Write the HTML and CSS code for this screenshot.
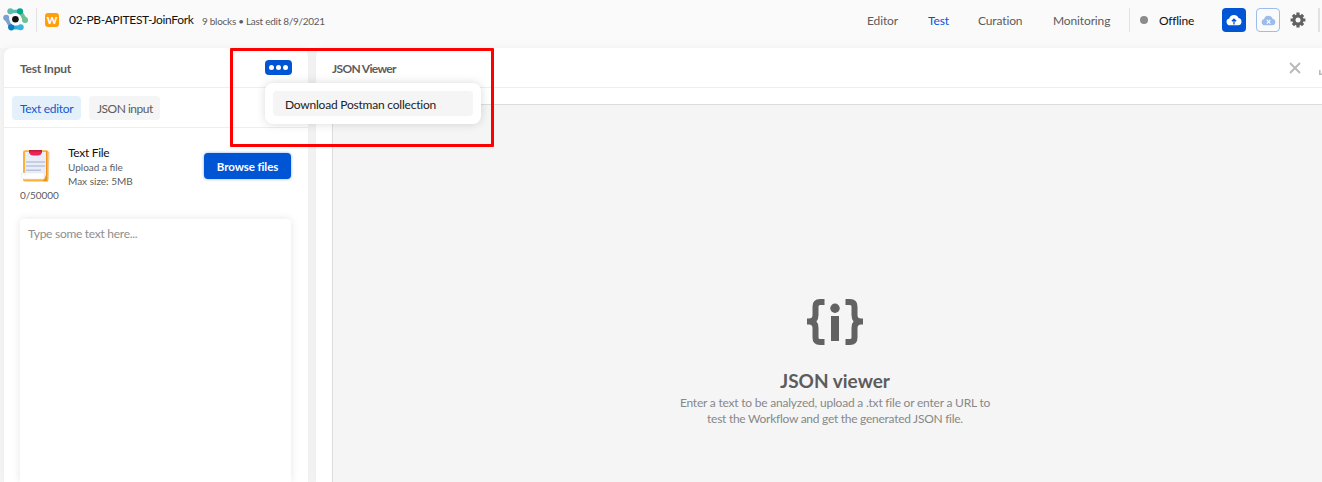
FILE: index.html
```html
<!DOCTYPE html>
<html lang="en">
<head>
<meta charset="utf-8">
<title>Workflow test</title>
<link rel="stylesheet" href="styles.css">
</head>
<body>
<header class="topbar">
  <svg class="logo" width="26" height="24" viewBox="0 0 26 24">
    <g fill="none" stroke-linecap="round">
      <path d="M7.5 3.5h10" stroke="#5bbcb0" stroke-width="3.6"/>
      <path d="M17 3.5l5.5 9" stroke="#6cc193" stroke-width="4.2"/>
      <path d="M3 9.5l5.5 10" stroke="#7d9fd0" stroke-width="4.2"/>
      <path d="M8.5 19.5h9" stroke="#34acd8" stroke-width="4"/>
    </g>
    <circle cx="7.3" cy="3.3" r="3" fill="#5bbcb0"/><circle cx="17" cy="3.3" r="3.1" fill="#00a98c"/>
    <circle cx="22" cy="12" r="3" fill="#6cc193"/><circle cx="3.2" cy="9.8" r="3" fill="#7d9fd0"/>
    <circle cx="8.2" cy="19.3" r="3.1" fill="#087fbd"/><circle cx="17.7" cy="19.2" r="3" fill="#34b4df"/>
    <circle cx="12.4" cy="11.2" r="6" fill="#fafafa"/><circle cx="12.4" cy="11.2" r="3.3" fill="#111"/>
  </svg>
  <span class="rule rule-logo"></span>
  <span class="badge">W</span>
  <span class="title">02-PB-APITEST-JoinFork</span>
  <span class="meta">9 blocks • Last edit 8/9/2021</span>
  <nav class="nav">
    <a class="nav-editor">Editor</a>
    <a class="nav-test">Test</a>
    <a class="nav-curation">Curation</a>
    <a class="nav-monitoring">Monitoring</a>
  </nav>
  <span class="rule"></span>
  <span class="dot"></span>
  <span class="status">Offline</span>
  <span class="icon-btn">
    <svg width="16" height="12" viewBox="0 0 16 12"><path d="M4 11.3a3.5 3.5 0 0 1-.8-6.9A5 5 0 0 1 12.6 4 3.7 3.7 0 0 1 12 11.3z" fill="#fff"/><path d="M8 10.5V5.4M5.9 7.3 8 5.2l2.1 2.1" fill="none" stroke="#0055d4" stroke-width="1.3"/></svg>
  </span>
  <span class="icon-btn icon-btn-off">
    <svg width="15" height="11" viewBox="0 0 16 12"><path d="M4 11.3a3.5 3.5 0 0 1-.8-6.9A5 5 0 0 1 12.6 4 3.7 3.7 0 0 1 12 11.3z" fill="#9bbcec"/><path d="M6.2 5.3l3.8 4M10 5.3L6.2 9.3" stroke="#fff" stroke-width="1.2"/></svg>
  </span>
  <svg class="gear" width="16" height="16" viewBox="0 0 16 16">
    <g stroke="#626262" stroke-width="3.2"><path d="M8 .6v14.8M.6 8h14.8M2.9 2.9l10.2 10.2M13.1 2.9L2.9 13.1"/></g>
    <circle cx="8" cy="8" r="5.6" fill="#626262"/><circle cx="8" cy="8" r="2.5" fill="#fafafa"/>
  </svg>
  <span class="rule rule-end"></span>
</header>

<main class="panels">
  <section class="panel input-panel">
    <div class="panel-head">
      <h2 class="head-input">Test Input</h2>
      <div class="more">
        <i></i><i></i><i></i>
        <div class="menu"><div class="menu-item"><span>Download Postman collection</span></div></div>
      </div>
    </div>
    <div class="tabs">
      <span class="tab tab-on">Text editor</span>
      <span class="tab tab-json">JSON input</span>
    </div>
    <div class="upload">
      <svg class="file-icon" width="32" height="34" viewBox="0 0 32 34">
        <path d="M26 2l4 1-2 30h-5z" fill="#e8e3df"/>
        <rect x="3" y="1.2" width="25.5" height="31.2" rx="2" fill="#fbb23c"/>
        <path d="M27 2v30h-4l3-5V2z" fill="#ee921c"/>
        <path d="M5 3h21v23l-2 4H5z" fill="#e9edf7"/>
        <path d="M9 1h13v2.500q-1 3-4 3h-5q-3 0-4-3z" fill="#ee2456"/>
        <path d="M9 1h13v1.500H9z" fill="#b91e3d"/>
        <path d="M6 13h19M6 17h19M6 21.300h15" stroke="#b8c4df" stroke-width="1.4"/>
        <path d="M1 24h22q1 0 1 2v4H4q-3 0-3-6z" fill="#fff" stroke="#ece9e7" stroke-width=".6"/>
      </svg>
      <div class="file-text">
        <strong>Text File</strong>
        <span>Upload a file</span>
        <span>Max size: 5MB</span>
      </div>
      <button class="browse"><span>Browse files</span></button>
    </div>
    <div class="count">0/50000</div>
    <div class="editor"><span>Type some text here...</span></div>
  </section>

  <section class="panel viewer-panel">
    <div class="panel-head">
      <h2 class="head-viewer">JSON Viewer</h2>
      <svg class="close" width="12" height="12" viewBox="0 0 12 12"><path d="M1 1l10 10M11 1L1 11" stroke="#b9b9b9" stroke-width="1.9"/></svg>
      <svg class="expand" width="3" height="12" viewBox="0 0 3 12"><path d="M.8 7v4.200H3" fill="none" stroke="#b9b9b9" stroke-width="1.6"/></svg>
    </div>
    <div class="viewer">
      <svg width="56" height="46" viewBox="0 0 56 46" fill="none">
        <path d="M17.500 3H13Q8.500 3 8.500 7.500V16Q8.500 22.500 2 22.500H0H2Q8.500 22.500 8.500 29v9.500Q8.500 43 13 43h4.500" stroke="#626262" stroke-width="6"/>
        <path d="M38.500 3H43Q47.500 3 47.500 7.500V16Q47.500 22.500 54 22.500h2h-2Q47.500 22.500 47.500 29v9.500Q47.500 43 43 43h-4.500" stroke="#626262" stroke-width="6"/>
        <circle cx="28" cy="9.200" r="4.700" fill="#626262"/><path d="M24 17h8v25h-8z" fill="#626262"/>
      </svg>
      <h1><span>JSON viewer</span></h1>
      <p><span class="line-one">Enter a text to be analyzed, upload a .txt file or enter a URL to</span><br><span class="line-two">test the Workflow and get the generated JSON file.</span></p>
    </div>
  </section>
</main>
<div class="highlight"></div>
</body>
</html>
```
FILE: styles.css
```css
* { box-sizing: border-box; }
body {
  margin: 0; height: 482px; overflow: hidden; background: #fafafa;
  display: flex; flex-direction: column;
  font: 12px/16px Lato, "Open Sans", sans-serif; color: #5c5c5c;
}
h1, h2, p { margin: 0; }
svg { display: block; flex: none; }

.topbar { height: 48px; flex: none; display: flex; align-items: center; padding: 0 2px 8px 3px; white-space: nowrap; }
.rule { width: 1px; height: 24px; background: #e2e2e2; flex: none; }
.rule-logo { margin: 0 8px 0 7px; }
.rule-end { width: 2px; margin-left: 12px; }
.badge { width: 14px; height: 14px; border-radius: 3px; background: #ff9f0a; color: #fff; font-size: 10px; font-weight: 900; line-height: 14px; text-align: center; }
.title { margin-left: 10px; width: 133px; color: #111; letter-spacing: -.33px; }
.meta { font-size: 10px; letter-spacing: -.28px; padding-top: 1px; }
.nav { display: flex; margin-left: auto; letter-spacing: -.13px; }
.nav a { padding-top: 2px; }
.nav-editor { width: 61px; }
.nav-test { width: 50px; color: #0055d4; }
.nav-curation { width: 75px; }
.nav-monitoring { width: 76px; }
.dot { width: 8px; height: 8px; margin: 0 11px 0 10px; border-radius: 50%; background: #8b8b8b; }
.status { width: 63px; padding-top: 2px; color: #111; letter-spacing: -.25px; }
.icon-btn { width: 24px; height: 24px; flex: none; border-radius: 4px; background: #0055d4; display: flex; align-items: center; justify-content: center; }
.icon-btn-off { margin-left: 10px; background: #fafafa; border: 1px solid #9bbcec; }
.gear { margin-left: 10px; }

.panels { flex: 1; min-height: 0; display: flex; gap: 8px; padding-left: 4px; background: #f5f5f5; }
.panel { background: #fff; border-radius: 8px 0 0 0; box-shadow: 0 0 8px rgba(0, 0, 0, .05); display: flex; flex-direction: column; }
.input-panel { width: 304px; flex: none; border-radius: 8px 8px 0 0; position: relative; z-index: 1; }
.viewer-panel { flex: 1; min-width: 0; }
.panel-head { height: 40px; flex: none; display: flex; align-items: center; padding: 2px 16px 0; border-bottom: 1px solid #eee; }
.viewer-panel .panel-head { padding-right: 0; }
h2 { font-size: 12px; line-height: 16px; font-weight: 700; }
.head-input { letter-spacing: -.2px; }
.head-viewer { letter-spacing: -.68px; }
.more { position: relative; margin: 0 0 2px auto; width: 27px; height: 15px; border-radius: 4px; background: #0055d4; display: flex; align-items: center; justify-content: center; gap: 2px; }
.more i { width: 5px; height: 5px; border-radius: 50%; background: #fff; }
.menu { position: absolute; left: 0; top: 23px; width: 216px; height: 41px; padding: 8px; background: #fff; border-radius: 8px; box-shadow: 0 0 10px rgba(0, 0, 0, .15); }
.menu-item { height: 25px; padding: 6px 12px 0; background: #f5f5f5; border-radius: 4px; color: #222; white-space: nowrap; letter-spacing: -.22px; }
.tabs { height: 40px; flex: none; display: flex; gap: 8px; padding: 8px 8px 0; border-bottom: 1px solid #eee; }
.tab { height: 24px; padding: 5px 8px 0; border-radius: 4px; background: #f5f5f5; width: 71px; white-space: nowrap; letter-spacing: -.5px; }
.tab-on { width: 69px; background: #e4f1fa; color: #1259cf; letter-spacing: -.3px; }
.upload { display: flex; flex: none; padding: 17px 17px 0 16px; height: 60px; }
.file-icon { margin-top: 4px; }
.file-text { display: flex; flex-direction: column; margin-left: 16px; font-size: 10px; line-height: 14px; }
.file-text strong { font-size: 12px; line-height: 16px; margin-bottom: -1px; font-weight: 400; color: #111; letter-spacing: -.3px; }
.browse { margin: 8px 0 0 auto; padding: 2px 0 0; width: 87px; height: 26px; border: 0; border-radius: 4px; background: #0055d4; color: #fff; font: 700 11.5px/16px Lato, sans-serif; letter-spacing: -.08px; box-shadow: 0 0 3px rgba(0, 85, 212, .5); }
.count { margin: 0 16px; flex: none; font-size: 10px; line-height: 14px; letter-spacing: -.1px; }
.editor { margin: 17px 17px 0 16px; flex: 1; padding: 7px 8px; border-radius: 4px 4px 0 0; box-shadow: 0 0 8px rgba(0, 0, 0, .1); color: #8e8e8e; letter-spacing: -.28px; }
.close { margin: 0 0 2px auto; }
.expand { margin: 0 0 0 18px; }
.viewer { flex: 1; margin: 16px 0 0 16px; background: #f5f5f5; border: solid #dcdcdc; border-width: 1px 0 0 1px; display: flex; flex-direction: column; align-items: center; padding: 194px 0 0 15px; text-align: center; }
h1 { margin-top: 24px; font-size: 19px; line-height: 24px; }
.viewer p { margin-top: 2px; color: #888; white-space: nowrap; }
.line-one { letter-spacing: -.21px; }
.line-two { letter-spacing: -.27px; }
.highlight { position: absolute; z-index: 5; left: 230px; top: 48px; width: 264px; height: 99px; border: 3px solid #f00; border-radius: 1px; }
```
